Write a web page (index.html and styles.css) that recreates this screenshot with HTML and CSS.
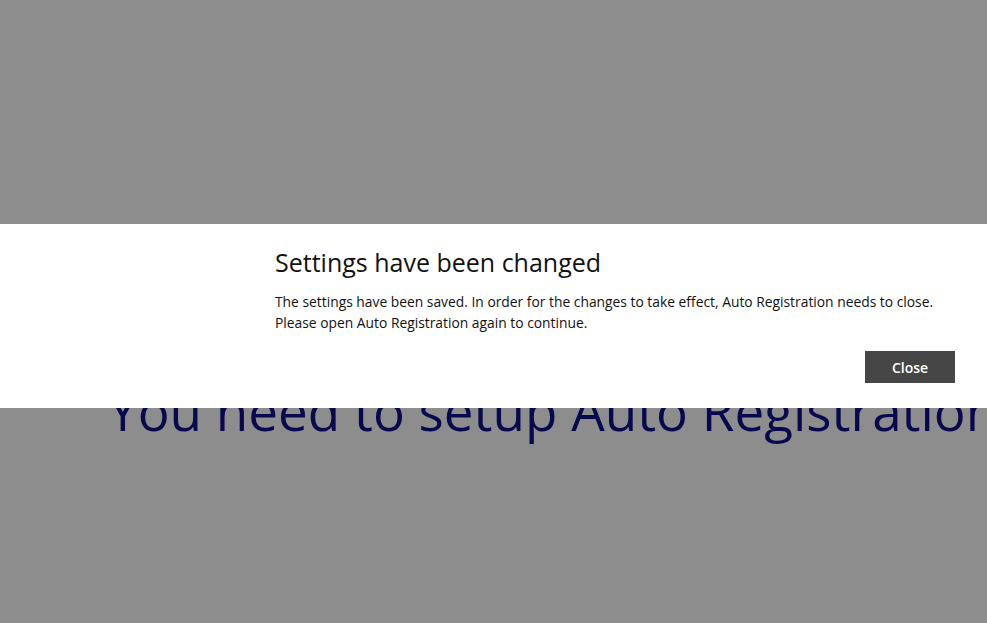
FILE: index.html
```html
<!DOCTYPE html>
<html>
<head>
<meta charset="utf-8">
<link rel="stylesheet" href="styles.css">
</head>
<body>
<main class="page">
  <h1 class="setup">You need to setup Auto Registration</h1>
</main>
<div class="overlay">
  <div class="dialog">
    <h2 class="title">Settings have been changed</h2>
    <p class="msg">The settings have been saved. In order for the changes to take effect, Auto Registration needs to close.<br>Please open Auto Registration again to continue.</p>
    <div class="actions"><button class="close">Close</button></div>
  </div>
</div>
</body>
</html>
```
FILE: styles.css
```css
html, body { margin: 0; padding: 0; }
body {
  width: 987px;
  height: 623px;
  overflow: hidden;
  background: #8d8d8d;
  font-family: "Open Sans", "Noto Sans", sans-serif;
  position: relative;
}
.page { padding: 371px 0 0 108px; }
.setup {
  margin: 0;
  font-weight: 400;
  font-size: 53px;
  line-height: 80px;
  color: #08084f;
  white-space: nowrap;
}
.overlay {
  position: absolute;
  left: 0; top: 224px;
  width: 100%;
  height: 184px;
  background: #fff;
}
.dialog {
  width: 680px;
  margin-left: 275px;
  padding-top: 20px;
}
.title {
  margin: 0;
  font-weight: 400;
  font-size: 25px;
  line-height: 36px;
  color: #111;
}
.msg {
  margin: 11px 0 0;
  font-size: 13.83px;
  line-height: 21px;
  color: #111;
}
.actions { display: flex; justify-content: flex-end; margin-top: 18px; }
.close {
  width: 90px; height: 32px;
  background: #464646;
  color: #fff;
  border: 0;
  font-family: inherit;
  font-weight: 600;
  font-size: 14px;
}
```
